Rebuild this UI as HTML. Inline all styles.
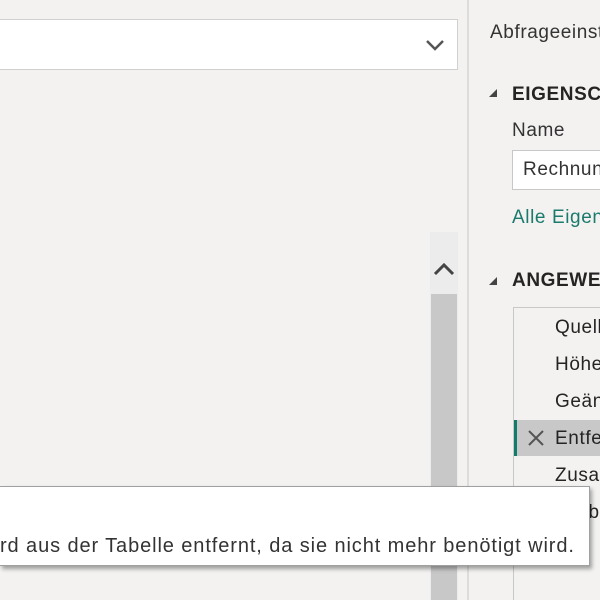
<!DOCTYPE html>
<html><head><style>
*{margin:0;padding:0;box-sizing:border-box}
html,body{width:600px;height:600px;overflow:hidden}
body{background:#f3f2f1;position:relative;font-family:"Liberation Sans",sans-serif;color:#252423}
#c{position:absolute;left:0;top:0;width:600px;height:600px;overflow:hidden}
.a{position:absolute;white-space:nowrap}
.t{font-size:19px;letter-spacing:0.6px}
</style></head><body><div id="c">
<div class="a" style="left:0;top:19px;width:458px;height:51px;background:#fff;border:1px solid #d0d0d0;border-left:none"></div>
<svg class="a" style="left:424px;top:37px" width="22" height="16"><path d="M3 4l8 8 8-8" stroke="#555" stroke-width="2.5" fill="none"/></svg>
<div class="a" style="left:467px;top:0;width:2px;height:600px;background:#dcdcdc"></div>
<div class="a" style="left:430px;top:232px;width:28px;height:368px;background:#ececec"></div>
<svg class="a" style="left:432px;top:261px" width="24" height="16"><path d="M3 13l9-9 9 9" stroke="#444" stroke-width="3" fill="none"/></svg>
<div class="a" style="left:431px;top:294px;width:26px;height:306px;background:#c8c8c8"></div>
<div class="a" style="left:469px;top:0;width:131px;height:600px;overflow:hidden">
<div class="a t" style="left:21px;top:22px;color:#333">Abfrageeinstellungen</div>
<svg class="a" style="left:18px;top:87px" width="12" height="12"><path d="M10 2v8H2z" fill="#444"/></svg>
<div class="a t" style="left:43px;top:84px;font-weight:bold">EIGENSCHAFTEN</div>
<div class="a t" style="left:43px;top:120px;color:#333">Name</div>
<div class="a" style="left:43px;top:150px;width:100px;height:40px;background:#fff;border:1px solid #c8c8c8"></div>
<div class="a t" style="left:54px;top:159px;color:#333">Rechnungen</div>
<div class="a t" style="left:43px;top:207px;color:#1a7a6c">Alle Eigenschaften</div>
<svg class="a" style="left:18px;top:275px" width="12" height="12"><path d="M10 2v8H2z" fill="#444"/></svg>
<div class="a t" style="left:43px;top:270px;font-weight:bold">ANGEWENDETE</div>
<div class="a" style="left:44px;top:307px;width:100px;height:300px;border:1px solid #c8c8c8;background:#f3f2f1"></div>
<div class="a t" style="left:86px;top:317px">Quelle</div>
<div class="a t" style="left:86px;top:354px">Höher</div>
<div class="a t" style="left:86px;top:391px">Geändert</div>
<div class="a" style="left:45px;top:420px;width:90px;height:36px;background:#c8c8c8"></div>
<div class="a" style="left:45px;top:420px;width:3px;height:36px;background:#107c6b"></div>
<svg class="a" style="left:57px;top:428px" width="20" height="20"><path d="M3 3l14 14M17 3L3 17" stroke="#555" stroke-width="2"/></svg>
<div class="a t" style="left:86px;top:428px">Entfernt</div>
<div class="a t" style="left:86px;top:465px">Zusammen</div>
<div class="a t" style="left:86px;top:502px">bbbbbbb</div>
</div>
<div class="a" style="left:0;top:486px;width:590px;height:80px;background:#fff;border:1px solid #a0a0a0;border-left:none;box-shadow:2px 3px 4px rgba(0,0,0,.35)"></div>
<div class="a" style="left:0;top:535px;font-size:20px;letter-spacing:0.9px;color:#333">rd aus der Tabelle entfernt, da sie nicht mehr benötigt wird.</div>
</div></body></html>
